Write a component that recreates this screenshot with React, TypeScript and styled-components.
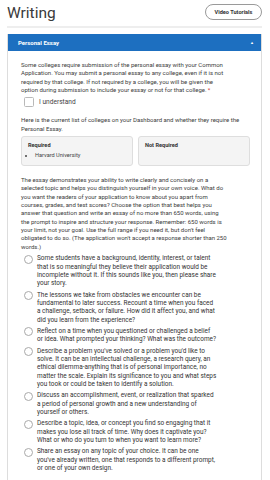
import React from "react";
import styled, { createGlobalStyle } from "styled-components";

const GlobalStyle = createGlobalStyle`
  html, body {
    margin: 0;
    padding: 0;
    background: #ffffff;
    font-family: Roboto, "Liberation Sans", Arial, sans-serif;
    color: #333;
  }
`;

const Page = styled.div`
  width: 270px;
  height: 480px;
  overflow: hidden;
  padding: 0 8px 0 7px;
  box-sizing: border-box;
`;

const TopBar = styled.div`
  display: flex;
  align-items: center;
  justify-content: space-between;
  height: 26px;
  border-bottom: 2px solid #eeeeee;
`;

const Title = styled.h1`
  margin: 0;
  font-size: 15.5px;
  font-weight: 400;
  color: #3a3a3a;
`;

const PillButton = styled.button`
  font-family: inherit;
  font-size: 5.6px;
  font-weight: 700;
  color: #333;
  background: #fff;
  border: 1px solid #9a9a9a;
  border-radius: 9px;
  width: 57px;
  height: 16px;
  padding: 0;
  margin-top: -2px;
`;

const Panel = styled.section`
  margin-top: 6px;
  border: 1px solid #dddddd;
  border-top: none;
`;

const PanelHead = styled.div`
  display: flex;
  align-items: center;
  justify-content: space-between;
  height: 17px;
  padding: 0 7px 0 10px;
  background: #1d6fc0;
  color: #fff;
  font-size: 6px;
  font-weight: 700;
`;

const Caret = styled.span`
  font-size: 4px;
  line-height: 1;
`;

const PanelBody = styled.div`
  padding: 10px 8px 10px 13px;
`;

const Para = styled.p`
  margin: 0;
  font-size: 6px;
  line-height: 8.35px;
  color: #3c3c3c;
`;

const IntroPara = styled(Para)`
  max-width: 210px;
`;

const ListIntro = styled(Para)`
  max-width: 232px;
`;

const EssayPara = styled(Para)`
  max-width: 206px;
`;

const Req = styled.span`
  margin-left: 1px;
  color: #d0342c;
`;

const CheckRow = styled.label`
  display: flex;
  align-items: center;
  gap: 5px;
  margin: 3px 0 9px 3px;
  font-size: 6.6px;
  color: #444;
`;

const CheckBox = styled.span`
  width: 8px;
  height: 8px;
  border: 1px solid #b9b9b9;
  border-radius: 1.5px;
  background: #fff;
`;

const BoxRow = styled.div`
  display: grid;
  grid-template-columns: 1fr 1fr;
  gap: 5px;
  margin: 3px 3px 10px 0;
`;

const ListBox = styled.div`
  background: #f4f4f4;
  border: 1px solid #dedede;
  border-radius: 3px;
  height: 30px;
  box-sizing: border-box;
  padding: 4px 6px;
`;

const BoxTitle = styled.div`
  font-size: 5.6px;
  font-weight: 700;
  color: #333;
  line-height: 8px;
`;

const BoxList = styled.ul`
  margin: 2px 0 0;
  padding: 0 0 0 7px;
  font-size: 5.6px;
  line-height: 8px;
  color: #444;
`;

const Options = styled.div`
  display: flex;
  flex-direction: column;
  gap: 3px;
  margin-top: 3px;
`;

const Option = styled.label`
  display: flex;
  align-items: flex-start;
  gap: 4px;
  padding-left: 3px;
`;

const Radio = styled.span`
  flex: none;
  width: 7px;
  height: 7px;
  margin-top: 0.5px;
  border: 1px solid #a9a9a9;
  border-radius: 50%;
  background: #fff;
`;

const OptionText = styled.span`
  flex: 0 0 180.5px;
  font-size: 6.45px;
  line-height: 8.35px;
  color: #333;
`;

const prompts = [
  "Some students have a background, identity, interest, or talent that is so meaningful they believe their application would be incomplete without it. If this sounds like you, then please share your story.",
  "The lessons we take from obstacles we encounter can be fundamental to later success. Recount a time when you faced a challenge, setback, or failure. How did it affect you, and what did you learn from the experience?",
  "Reflect on a time when you questioned or challenged a belief or idea. What prompted your thinking? What was the outcome?",
  "Describe a problem you've solved or a problem you'd like to solve. It can be an intellectual challenge, a research query, an ethical dilemma-anything that is of personal importance, no matter the scale. Explain its significance to you and what steps you took or could be taken to identify a solution.",
  "Discuss an accomplishment, event, or realization that sparked a period of personal growth and a new understanding of yourself or others.",
  "Describe a topic, idea, or concept you find so engaging that it makes you lose all track of time. Why does it captivate you? What or who do you turn to when you want to learn more?",
  "Share an essay on any topic of your choice. It can be one you've already written, one that responds to a different prompt, or one of your own design.",
];

const App = () => {
  return (
    <>
      <GlobalStyle />
      <Page>
        <TopBar>
          <Title>Writing</Title>
          <PillButton>Video Tutorials</PillButton>
        </TopBar>
        <Panel>
          <PanelHead>
            <span>Personal Essay</span>
            <Caret>▲</Caret>
          </PanelHead>
          <PanelBody>
            <IntroPara>
              Some colleges require submission of the personal essay with your
              Common Application. You may submit a personal essay to any
              college, even if it is not required by that college. If not
              required by a college, you will be given the option during
              submission to include your essay or not for that college.
              <Req>*</Req>
            </IntroPara>
            <CheckRow>
              <CheckBox />
              I understand
            </CheckRow>
            <ListIntro>
              Here is the current list of colleges on your Dashboard and whether
              they require the Personal Essay.
            </ListIntro>
            <BoxRow>
              <ListBox>
                <BoxTitle>Required</BoxTitle>
                <BoxList>
                  <li>Harvard University</li>
                </BoxList>
              </ListBox>
              <ListBox>
                <BoxTitle>Not Required</BoxTitle>
              </ListBox>
            </BoxRow>
            <EssayPara>
              The essay demonstrates your ability to write clearly and
              concisely on a selected topic and helps you distinguish yourself
              in your own voice. What do you want the readers of your
              application to know about you apart from courses, grades, and
              test scores? Choose the option that best helps you answer that
              question and write an essay of no more than 650 words, using the
              prompt to inspire and structure your response. Remember: 650
              words is your limit, not your goal. Use the full range if you
              need it, but don't feel obligated to do so. (The application
              won't accept a response shorter than 250 words.)
            </EssayPara>
            <Options>
              {prompts.map((p, i) => (
                <Option key={i}>
                  <Radio />
                  <OptionText>{p}</OptionText>
                </Option>
              ))}
            </Options>
          </PanelBody>
        </Panel>
      </Page>
    </>
  );
};

export default App;
